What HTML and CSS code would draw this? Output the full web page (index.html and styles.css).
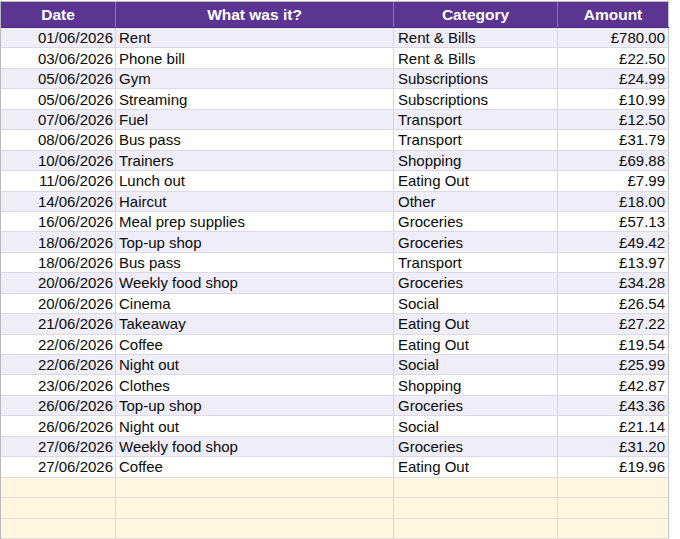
FILE: index.html
```html
<!DOCTYPE html>
<html>
<head>
<meta charset="utf-8">
<link rel="stylesheet" href="styles.css">
</head>
<body>
<div class="sheet">
  <div class="row head">
    <div class="cell">Date</div>
    <div class="cell">What was it?</div>
    <div class="cell">Category</div>
    <div class="cell">Amount</div>
  </div>
  <div class="row"><div class="cell date">01/06/2026</div><div class="cell">Rent</div><div class="cell cat">Rent &amp; Bills</div><div class="cell amt">£780.00</div></div>
  <div class="row"><div class="cell date">03/06/2026</div><div class="cell">Phone bill</div><div class="cell cat">Rent &amp; Bills</div><div class="cell amt">£22.50</div></div>
  <div class="row"><div class="cell date">05/06/2026</div><div class="cell">Gym</div><div class="cell cat">Subscriptions</div><div class="cell amt">£24.99</div></div>
  <div class="row"><div class="cell date">05/06/2026</div><div class="cell">Streaming</div><div class="cell cat">Subscriptions</div><div class="cell amt">£10.99</div></div>
  <div class="row"><div class="cell date">07/06/2026</div><div class="cell">Fuel</div><div class="cell cat">Transport</div><div class="cell amt">£12.50</div></div>
  <div class="row"><div class="cell date">08/06/2026</div><div class="cell">Bus pass</div><div class="cell cat">Transport</div><div class="cell amt">£31.79</div></div>
  <div class="row"><div class="cell date">10/06/2026</div><div class="cell">Trainers</div><div class="cell cat">Shopping</div><div class="cell amt">£69.88</div></div>
  <div class="row"><div class="cell date">11/06/2026</div><div class="cell">Lunch out</div><div class="cell cat">Eating Out</div><div class="cell amt">£7.99</div></div>
  <div class="row"><div class="cell date">14/06/2026</div><div class="cell">Haircut</div><div class="cell cat">Other</div><div class="cell amt">£18.00</div></div>
  <div class="row"><div class="cell date">16/06/2026</div><div class="cell">Meal prep supplies</div><div class="cell cat">Groceries</div><div class="cell amt">£57.13</div></div>
  <div class="row"><div class="cell date">18/06/2026</div><div class="cell">Top-up shop</div><div class="cell cat">Groceries</div><div class="cell amt">£49.42</div></div>
  <div class="row"><div class="cell date">18/06/2026</div><div class="cell">Bus pass</div><div class="cell cat">Transport</div><div class="cell amt">£13.97</div></div>
  <div class="row"><div class="cell date">20/06/2026</div><div class="cell">Weekly food shop</div><div class="cell cat">Groceries</div><div class="cell amt">£34.28</div></div>
  <div class="row"><div class="cell date">20/06/2026</div><div class="cell">Cinema</div><div class="cell cat">Social</div><div class="cell amt">£26.54</div></div>
  <div class="row"><div class="cell date">21/06/2026</div><div class="cell">Takeaway</div><div class="cell cat">Eating Out</div><div class="cell amt">£27.22</div></div>
  <div class="row"><div class="cell date">22/06/2026</div><div class="cell">Coffee</div><div class="cell cat">Eating Out</div><div class="cell amt">£19.54</div></div>
  <div class="row"><div class="cell date">22/06/2026</div><div class="cell">Night out</div><div class="cell cat">Social</div><div class="cell amt">£25.99</div></div>
  <div class="row"><div class="cell date">23/06/2026</div><div class="cell">Clothes</div><div class="cell cat">Shopping</div><div class="cell amt">£42.87</div></div>
  <div class="row"><div class="cell date">26/06/2026</div><div class="cell">Top-up shop</div><div class="cell cat">Groceries</div><div class="cell amt">£43.36</div></div>
  <div class="row"><div class="cell date">26/06/2026</div><div class="cell">Night out</div><div class="cell cat">Social</div><div class="cell amt">£21.14</div></div>
  <div class="row"><div class="cell date">27/06/2026</div><div class="cell">Weekly food shop</div><div class="cell cat">Groceries</div><div class="cell amt">£31.20</div></div>
  <div class="row"><div class="cell date">27/06/2026</div><div class="cell">Coffee</div><div class="cell cat">Eating Out</div><div class="cell amt">£19.96</div></div>
  <div class="row blank"><div class="cell"></div><div class="cell"></div><div class="cell"></div><div class="cell"></div></div>
  <div class="row blank"><div class="cell"></div><div class="cell"></div><div class="cell"></div><div class="cell"></div></div>
  <div class="row blank"><div class="cell"></div><div class="cell"></div><div class="cell"></div><div class="cell"></div></div>
</div>
</body>
</html>
```

FILE: styles.css
```css
html, body {
  margin: 0;
  padding: 0;
  background: #ffffff;
}

body {
  font-family: "Liberation Sans", Arial, sans-serif;
  font-size: 15px;
  color: #0a0a0a;
  overflow: hidden;
}

.sheet {
  width: 669px;
  border-top: 1px solid #b9b9bd;
  border-left: 1px solid #b9b9bd;
  box-sizing: border-box;
  margin-top: 1px;
}

.row {
  display: grid;
  grid-template-columns: 115px 278px 164px 111px;
  height: 20.45px;
  box-sizing: border-box;
  border-bottom: 1px solid #dcd8e6;
}

.row:nth-child(even) {
  background: #efedf8;
}

.row:nth-child(odd) {
  background: #ffffff;
}

.cell {
  border-right: 1px solid #d7d3e2;
  display: flex;
  align-items: center;
  padding: 0 3px 0 3px;
  white-space: nowrap;
  overflow: hidden;
  line-height: 1;
}

.row .cell:last-child {
  border-right-color: #c4c2cc;
}

.head {
  height: 26px;
  background: #5b3591 !important;
  border-bottom: 1px solid #4b2a7e;
}

.head .cell {
  justify-content: center;
  color: #ffffff;
  font-weight: bold;
  font-size: 15.5px;
  border-right: 1px solid #8a74b4;
}

.head .cell:last-child {
  border-right-color: #c4c2cc;
}

.date {
  justify-content: flex-end;
  padding-right: 2px;
}

.cat {
  padding-left: 4px;
}

.amt {
  justify-content: flex-end;
  padding-right: 3px;
}

.blank {
  background: #fff6df !important;
  border-bottom: 1px solid #e2dcd6;
}

.blank .cell {
  border-right-color: #ddd8d4;
}
```
